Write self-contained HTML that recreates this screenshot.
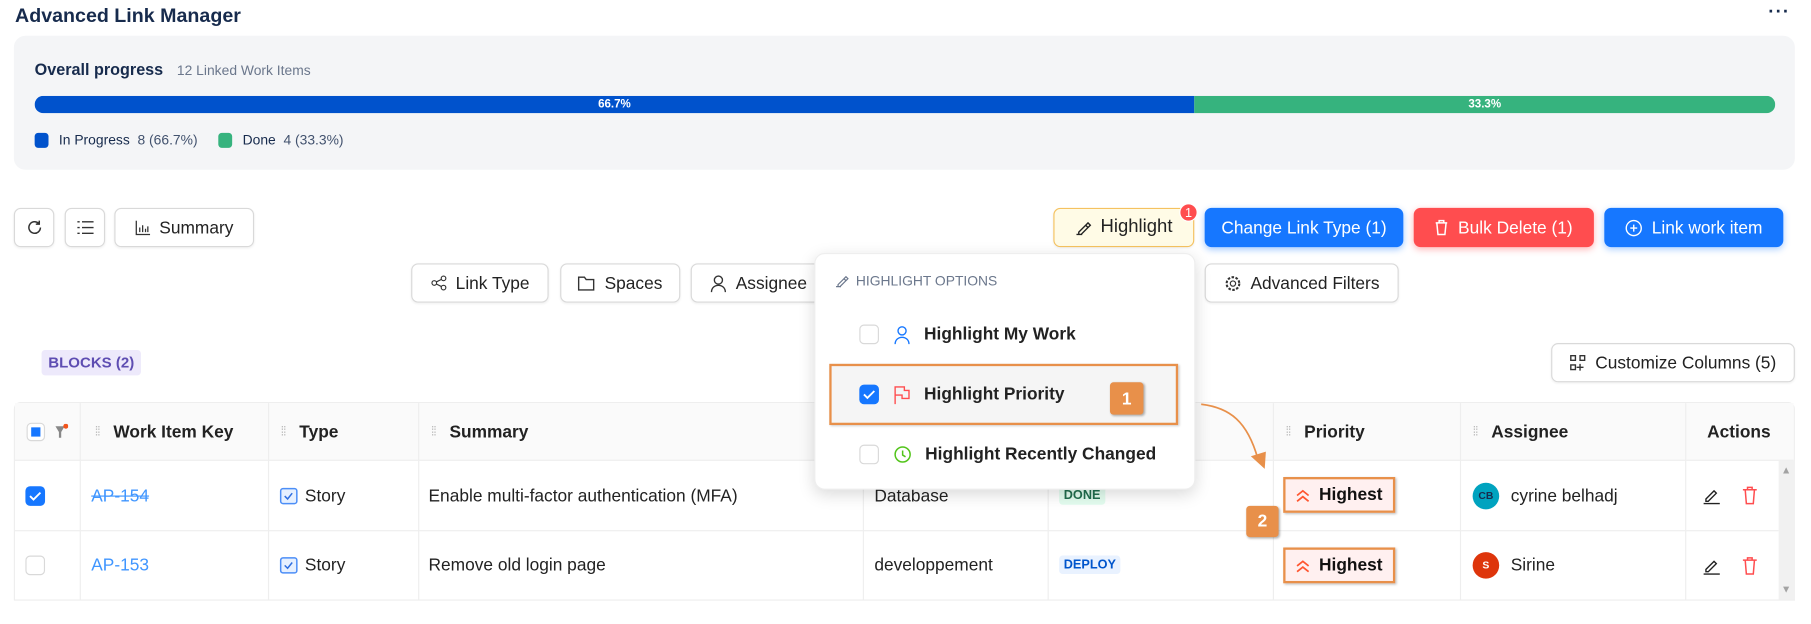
<!DOCTYPE html>
<html><head><meta charset="utf-8"><style>
*{box-sizing:border-box;margin:0;padding:0}
html,body{width:1811px;height:624px;overflow:hidden;background:#fff}
#w{width:1568px;height:540px;position:relative;transform:scale(1.155);transform-origin:0 0;font-family:"Liberation Sans",sans-serif;color:#172b4d}
.a{position:absolute}
.btn{position:absolute;height:34px;border:1px solid #d9d9d9;border-radius:6px;background:#fff;display:flex;align-items:center;justify-content:center;gap:8px;font-size:15px;color:#222;box-shadow:0 1px 2px rgba(0,0,0,.06)}
.pb{position:absolute;height:34px;border-radius:6px;color:#fff;display:flex;align-items:center;justify-content:center;gap:8px;font-size:15px}
.th{position:absolute;top:349px;height:50px;display:flex;align-items:center;font-weight:bold;font-size:15px;color:#222;border-right:1px solid #eee}
.dots{color:#bbb;font-size:11px;margin-right:12px;letter-spacing:-1px;font-weight:normal}
.cell{position:absolute;height:60px;display:flex;align-items:center;font-size:15px;color:#222;border-right:1px solid #eee}
.cb{width:17px;height:17px;border:1px solid #d9d9d9;border-radius:4px;background:#fff;display:inline-block}
.cbc{width:17px;height:17px;border-radius:4px;background:#1677ff;display:flex;align-items:center;justify-content:center}
.hi{position:absolute;left:1111px;width:97px;height:31px;border:2px solid #e8904a;background:#fff0f0;display:flex;align-items:center;justify-content:center;gap:8px;font-weight:bold;font-size:15px;color:#111;box-shadow:1px 1px 2px rgba(0,0,0,.25)}
.ob{position:absolute;background:#e8904a;color:#fff;border-radius:3px;font-weight:bold;font-size:15px;display:flex;align-items:center;justify-content:center;box-shadow:1px 1px 2px rgba(0,0,0,.3)}
</style></head><body><div id="w">
<div class="a" style="left:13px;top:4px;font-size:17px;font-weight:bold;color:#172b4d">Advanced Link Manager</div>
<div class="a" style="left:1531px;top:2px;font-size:16px;font-weight:bold;letter-spacing:1px">···</div>

<div class="a" style="left:12px;top:31px;width:1542px;height:116px;background:#f4f5f7;border-radius:10px"></div>
<div class="a" style="left:30px;top:52px;font-size:14px;font-weight:bold;color:#172b4d">Overall progress <span style="font-size:12px;font-weight:normal;color:#6b778c;margin-left:8px">12 Linked Work Items</span></div>
<div class="a" style="left:30px;top:83px;width:1507px;height:15px;border-radius:8px;overflow:hidden;display:flex;font-size:10px;font-weight:bold;color:#fff">
<div style="width:1004px;background:#0052cc;text-align:center;line-height:15px">66.7%</div>
<div style="flex:1;background:#36b37e;text-align:center;line-height:15px">33.3%</div></div>
<div class="a" style="left:30px;top:114px;font-size:12px;color:#42526e;display:flex;align-items:center">
<span style="width:12px;height:13px;background:#0052cc;border-radius:3px;margin-right:9px"></span><b style="font-weight:normal;color:#172b4d">In Progress</b>&nbsp;&nbsp;8 (66.7%)
<span style="width:12px;height:13px;background:#36b37e;border-radius:3px;margin:0 9px 0 18px"></span><b style="font-weight:normal;color:#172b4d">Done</b>&nbsp;&nbsp;4 (33.3%)</div>

<div class="btn" style="left:12px;top:180px;width:35px"><svg width="16" height="16" viewBox="0 0 16 16"><path d="M13 8a5 5 0 1 1-1.5-3.6M12 2v3h-3" fill="none" stroke="#333" stroke-width="1.3"/></svg></div>
<div class="btn" style="left:56px;top:180px;width:35px"><svg width="16" height="14" viewBox="0 0 16 14"><path d="M5 2h10M5 7h10M5 12h10M1 2h2M1 7h2M1 12h2" stroke="#333" stroke-width="1.2"/></svg></div>
<div class="btn" style="left:99px;top:180px;width:121px"><svg width="13" height="13" viewBox="0 0 13 13"><path d="M1 0v12h12M4 10V6M6.5 10V4M9 10V7M11 10V5" stroke="#333" stroke-width="1.1" fill="none"/></svg>Summary</div>

<div class="btn" style="left:912px;top:180px;width:122px;background:#fffbe6;border-color:#f5c260;font-size:16px"><svg width="14" height="14" viewBox="0 0 14 14"><path d="M3 11l6-6 2 2-6 6H3zM9 5l2-2 2 2-2 2M1 13h5" fill="none" stroke="#222" stroke-width="1.2"/></svg>Highlight</div>
<div class="a" style="left:1021px;top:176px;width:16px;height:16px;border-radius:8px;background:#ff4d4f;color:#fff;font-size:11px;text-align:center;line-height:16px;border:1px solid #fff">1</div>
<div class="pb" style="left:1043px;top:180px;width:172px;background:#1677ff;box-shadow:0 2px 6px rgba(22,119,255,.4)">Change Link Type (1)</div>
<div class="pb" style="left:1224px;top:180px;width:156px;background:#ff4d4f;box-shadow:0 2px 6px rgba(255,77,79,.4)"><svg width="12" height="14" viewBox="0 0 12 14"><path d="M1 3h10M4 3V1h4v2M2 3l1 10h6l1-10" fill="none" stroke="#fff" stroke-width="1.3"/></svg>Bulk Delete (1)</div>
<div class="pb" style="left:1389px;top:180px;width:155px;background:#1677ff;box-shadow:0 2px 6px rgba(22,119,255,.35)"><svg width="15" height="15" viewBox="0 0 15 15"><circle cx="7.5" cy="7.5" r="6.5" fill="none" stroke="#fff" stroke-width="1.2"/><path d="M7.5 4.5v6M4.5 7.5h6" stroke="#fff" stroke-width="1.2"/></svg>Link work item</div>

<div class="btn" style="left:356px;top:228px;width:119px"><svg width="14" height="14" viewBox="0 0 14 14"><circle cx="3" cy="7" r="2" fill="none" stroke="#333"/><circle cx="11" cy="3" r="2" fill="none" stroke="#333"/><circle cx="11" cy="11" r="2" fill="none" stroke="#333"/><path d="M5 6l4-2M5 8l4 2" stroke="#333"/></svg>Link Type</div>
<div class="btn" style="left:485px;top:228px;width:104px"><svg width="15" height="13" viewBox="0 0 15 13"><path d="M1 1h5l1.5 2H14v9H1z" fill="none" stroke="#333" stroke-width="1.2"/></svg>Spaces</div>
<div class="btn" style="left:598px;top:228px;width:120px;justify-content:flex-start;padding-left:16px"><svg width="14" height="15" viewBox="0 0 14 15"><circle cx="7" cy="4.5" r="3.5" fill="none" stroke="#333" stroke-width="1.2"/><path d="M1 15c0-4 3-6 6-6s6 2 6 6" fill="none" stroke="#333" stroke-width="1.2"/></svg>Assignee</div>
<div class="btn" style="left:1043px;top:228px;width:168px"><svg width="15" height="15" viewBox="0 0 15 15"><circle cx="7.5" cy="7.5" r="2.3" fill="none" stroke="#333"/><circle cx="7.5" cy="7.5" r="5.5" fill="none" stroke="#333" stroke-dasharray="2.2 1.3" stroke-width="1.8"/></svg>Advanced Filters</div>

<div class="a" style="left:36px;top:303px;width:86px;height:22px;background:#ede9fb;border-radius:3px;color:#5e4db2;font-weight:bold;font-size:13px;text-align:center;line-height:22px">BLOCKS (2)</div>
<div class="btn" style="left:1343px;top:297px;width:211px"><svg width="14" height="14" viewBox="0 0 14 14"><path d="M1 1h4v4H1zM9 1h4v4H9zM1 9h4v4H1zM9 8v6M6 11h6" fill="none" stroke="#333" stroke-width="1.2"/></svg>Customize Columns (5)</div>

<div class="a" style="left:12px;top:348px;width:1542px;height:172px;border:1px solid #eee;border-radius:6px 6px 0 0"></div>
<div class="a" style="left:13px;top:349px;width:1540px;height:50px;background:#fafafa;border-bottom:1px solid #eee"></div>
<div class="th" style="left:13px;width:57px;padding-left:10px;gap:8px"><span class="cb" style="width:16px;height:16px;position:relative"><span style="position:absolute;left:3px;top:3px;width:8px;height:8px;background:#1677ff"></span></span><svg width="12" height="14" viewBox="0 0 12 14"><path d="M1 2h8L6 7v5H4V7z" fill="#888"/><circle cx="10" cy="2" r="2.2" fill="#f2541b"/></svg></div>
<div class="th" style="left:70px;width:163px;padding-left:12px"><span class="dots">⁞⁞</span>Work Item Key</div>
<div class="th" style="left:233px;width:130px;padding-left:10px"><span class="dots">⁞⁞</span>Type</div>
<div class="th" style="left:363px;width:385px;padding-left:10px"><span class="dots">⁞⁞</span>Summary</div>
<div class="th" style="left:748px;width:160px"></div>
<div class="th" style="left:908px;width:195px"></div>
<div class="th" style="left:1103px;width:162px;padding-left:10px"><span class="dots">⁞⁞</span>Priority</div>
<div class="th" style="left:1265px;width:195px;padding-left:10px"><span class="dots">⁞⁞</span>Assignee</div>
<div class="th" style="left:1460px;width:93px;padding-left:18px;border:none">Actions</div>

<div class="a" style="left:13px;top:459px;width:1527px;border-top:1px solid #eee"></div>
<div class="a" style="left:13px;top:519px;width:1541px;border-top:1px solid #eee"></div>
<div class="a" style="left:1540px;top:399px;width:14px;height:120px;background:#f1f1f1"></div>
<div class="a" style="left:1542px;top:402px;font-size:9px;color:#a3a3a3">▲</div>
<div class="a" style="left:1542px;top:505px;font-size:9px;color:#a3a3a3">▼</div>

<!-- row1 -->
<div class="cell" style="left:13px;top:399px;width:57px;padding-left:9px"><span class="cbc"><svg width="11" height="9" viewBox="0 0 11 9"><path d="M1 4.5l3 3 6-6" fill="none" stroke="#fff" stroke-width="1.6"/></svg></span></div>
<div class="cell" style="left:70px;top:399px;width:163px;padding-left:9px;color:#4096ff;text-decoration:line-through">AP-154</div>
<div class="cell" style="left:233px;top:399px;width:130px;padding-left:9px;gap:6px"><svg width="16" height="15" viewBox="0 0 16 15"><rect x="1" y="1" width="14" height="13" rx="2" fill="#e6f0ff" stroke="#4c8ef7" stroke-width="1.3"/><path d="M4.5 7.5l2.5 2.5 4-5" fill="none" stroke="#2f6fe0" stroke-width="1.3"/></svg>Story</div>
<div class="cell" style="left:363px;top:399px;width:385px;padding-left:8px">Enable multi-factor authentication (MFA)</div>
<div class="cell" style="left:748px;top:399px;width:160px;padding-left:9px">Database</div>
<div class="cell" style="left:908px;top:399px;width:195px;padding-left:9px"><span style="background:#e3fcef;color:#216e4e;font-weight:bold;font-size:11px;padding:2px 4px;border-radius:3px">DONE</span></div>
<div class="cell" style="left:1103px;top:399px;width:162px"></div>
<div class="cell" style="left:1265px;top:399px;width:195px;padding-left:10px;gap:10px"><span style="width:23px;height:23px;border-radius:50%;background:#00a3bf;color:#172b4d;font-size:9px;font-weight:bold;display:flex;align-items:center;justify-content:center">CB</span>cyrine belhadj</div>
<!-- row2 -->
<div class="cell" style="left:13px;top:459px;width:57px;padding-left:9px"><span class="cb"></span></div>
<div class="cell" style="left:70px;top:459px;width:163px;padding-left:9px;color:#4096ff">AP-153</div>
<div class="cell" style="left:233px;top:459px;width:130px;padding-left:9px;gap:6px"><svg width="16" height="15" viewBox="0 0 16 15"><rect x="1" y="1" width="14" height="13" rx="2" fill="#e6f0ff" stroke="#4c8ef7" stroke-width="1.3"/><path d="M4.5 7.5l2.5 2.5 4-5" fill="none" stroke="#2f6fe0" stroke-width="1.3"/></svg>Story</div>
<div class="cell" style="left:363px;top:459px;width:385px;padding-left:8px">Remove old login page</div>
<div class="cell" style="left:748px;top:459px;width:160px;padding-left:9px">developpement</div>
<div class="cell" style="left:908px;top:459px;width:195px;padding-left:9px"><span style="background:#e9f2ff;color:#0055cc;font-weight:bold;font-size:11px;padding:2px 4px;border-radius:3px">DEPLOY</span></div>
<div class="cell" style="left:1103px;top:459px;width:162px"></div>
<div class="cell" style="left:1265px;top:459px;width:195px;padding-left:10px;gap:10px"><span style="width:23px;height:23px;border-radius:50%;background:#de350b;color:#fff;font-size:9px;font-weight:bold;display:flex;align-items:center;justify-content:center">S</span>Sirine</div>

<svg class="a" style="left:1474px;top:421px" width="60" height="16" viewBox="0 0 60 16">
<path d="M3 11l7-7 2 2-7 7H3zM1 15h14" fill="none" stroke="#222" stroke-width="1.2"/>
<path d="M35 3h12M39 3V1h4v2M37 3l1 12h6l1-12" fill="none" stroke="#ff4d4f" stroke-width="1.3"/></svg>
<svg class="a" style="left:1474px;top:482px" width="60" height="16" viewBox="0 0 60 16">
<path d="M3 11l7-7 2 2-7 7H3zM1 15h14" fill="none" stroke="#222" stroke-width="1.2"/>
<path d="M35 3h12M39 3V1h4v2M37 3l1 12h6l1-12" fill="none" stroke="#ff4d4f" stroke-width="1.3"/></svg>

<div class="hi" style="top:413px"><svg width="12" height="12" viewBox="0 0 12 12"><path d="M1 6l5-4 5 4M1 11l5-4 5 4" fill="none" stroke="#ff5630" stroke-width="1.5"/></svg>Highest</div>
<div class="hi" style="top:474px"><svg width="12" height="12" viewBox="0 0 12 12"><path d="M1 6l5-4 5 4M1 11l5-4 5 4" fill="none" stroke="#ff5630" stroke-width="1.5"/></svg>Highest</div>
<div class="ob" style="left:1079px;top:438px;width:28px;height:27px">2</div>

<!-- dropdown -->
<div class="a" style="left:705px;top:219px;width:330px;height:205px;background:#fff;border-radius:9px;box-shadow:0 4px 14px rgba(0,0,0,.15);border:1px solid #eee"></div>
<div class="a" style="left:723px;top:236px;font-size:12px;color:#6b778c;display:flex;gap:6px;align-items:center"><svg width="12" height="12" viewBox="0 0 14 14"><path d="M3 11l6-6 2 2-6 6H3zM9 5l2-2 2 2-2 2M1 13h5" fill="none" stroke="#6b778c" stroke-width="1.2"/></svg>HIGHLIGHT OPTIONS</div>
<div class="a" style="left:744px;top:281px;display:flex;align-items:center;font-size:15px;font-weight:bold;color:#222"><span class="cb"></span><svg style="margin:0 12px 0 13px" width="14" height="16" viewBox="0 0 14 16"><circle cx="7" cy="4.5" r="3.5" fill="none" stroke="#1677ff" stroke-width="1.2"/><path d="M1 16c0-4 3-6 6-6s6 2 6 6" fill="none" stroke="#1677ff" stroke-width="1.2"/></svg>Highlight My Work</div>
<div class="a" style="left:718px;top:315px;width:302px;height:53px;background:#f5f5f5;border:2px solid #e8904a;box-shadow:1px 1px 2px rgba(0,0,0,.2)"></div>
<div class="a" style="left:744px;top:333px;display:flex;align-items:center;font-size:15px;font-weight:bold;color:#222"><span class="cbc"><svg width="11" height="9" viewBox="0 0 11 9"><path d="M1 4.5l3 3 6-6" fill="none" stroke="#fff" stroke-width="1.6"/></svg></span><svg style="margin:0 12px 0 13px" width="14" height="16" viewBox="0 0 14 16"><path d="M1 16V1h8v3h4v7H7V8H1" fill="none" stroke="#ff4d4f" stroke-width="1.2"/></svg>Highlight Priority</div>
<div class="ob" style="left:961px;top:331px;width:29px;height:28px">1</div>
<div class="a" style="left:744px;top:385px;display:flex;align-items:center;font-size:15px;font-weight:bold;color:#222"><span class="cb"></span><svg style="margin:0 12px 0 13px" width="15" height="15" viewBox="0 0 15 15"><circle cx="7.5" cy="7.5" r="6.5" fill="none" stroke="#52c41a" stroke-width="1.3"/><path d="M7.5 4v4l2.5 1.5" fill="none" stroke="#52c41a" stroke-width="1.3"/></svg>Highlight Recently Changed</div>

<svg class="a" style="left:1035px;top:345px" width="75" height="65" viewBox="0 0 75 65"><path d="M5 5c25 3 40 15 49 47" fill="none" stroke="#e8904a" stroke-width="1.5"/><path d="M48 50l12 11 1-15z" fill="#e8904a"/></svg>
</div></body></html>
